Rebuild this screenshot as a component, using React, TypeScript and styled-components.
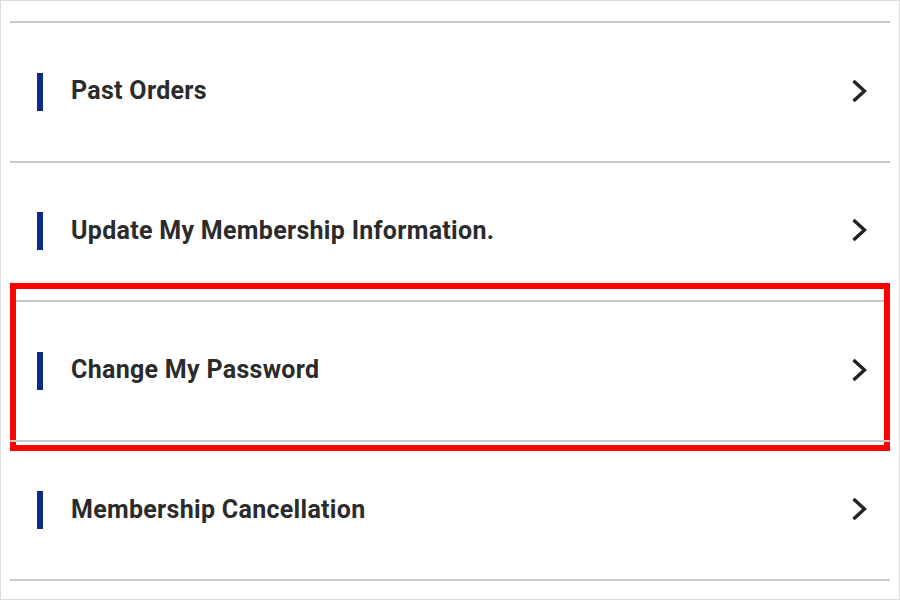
import React from 'react';
import styled, { createGlobalStyle } from 'styled-components';

const GlobalStyle = createGlobalStyle`
  html, body {
    margin: 0;
    padding: 0;
    background: #ffffff;
  }
  body {
    font-family: Roboto, "Liberation Sans", Arial, sans-serif;
  }
`;

const Page = styled.div`
  box-sizing: border-box;
  width: 900px;
  height: 600px;
  border: 1px solid #dcdcdc;
  padding: 20px 9px 0;
  background: #ffffff;
`;

const List = styled.ul`
  list-style: none;
  margin: 0;
  padding: 0;
  border-bottom: 2px solid #c9c9c9;
`;

const Item = styled.li`
  position: relative;
  box-sizing: border-box;
  height: 139.5px;
  border-top: 2px solid #c9c9c9;
  display: flex;
  align-items: center;
  padding: 0 23px 0 27px;
  color: #2b2b2b;
`;

const Marker = styled.span`
  width: 6px;
  height: 38px;
  background: #0b2a8c;
  flex: none;
`;

const Label = styled.span`
  flex: 1;
  margin-left: 28px;
  margin-top: -2px;
  font-size: 25px;
  font-weight: 700;
  letter-spacing: 0.3px;
`;

const Chevron = styled.svg`
  width: 16px;
  height: 24px;
  flex: none;
  margin-top: -2px;
`;

const Highlight = styled.div`
  position: absolute;
  left: 0;
  right: 0;
  top: -19px;
  bottom: -11px;
  border: 6px solid #ff0000;
  pointer-events: none;
`;

const items = [
  { label: 'Past Orders' },
  { label: 'Update My Membership Information.' },
  { label: 'Change My Password', highlight: true },
  { label: 'Membership Cancellation' },
];

const App: React.FC = () => {
  return (
    <>
      <GlobalStyle />
      <Page>
        <List>
          {items.map((item) => (
            <Item key={item.label}>
              <Marker />
              <Label>{item.label}</Label>
              <Chevron viewBox="0 0 16 24">
                <path d="M2.5 2 L13.5 12 L2.5 22" fill="none" stroke="#222" strokeWidth="3.4" />
              </Chevron>
              {item.highlight && <Highlight />}
            </Item>
          ))}
        </List>
      </Page>
    </>
  );
};

export default App;
